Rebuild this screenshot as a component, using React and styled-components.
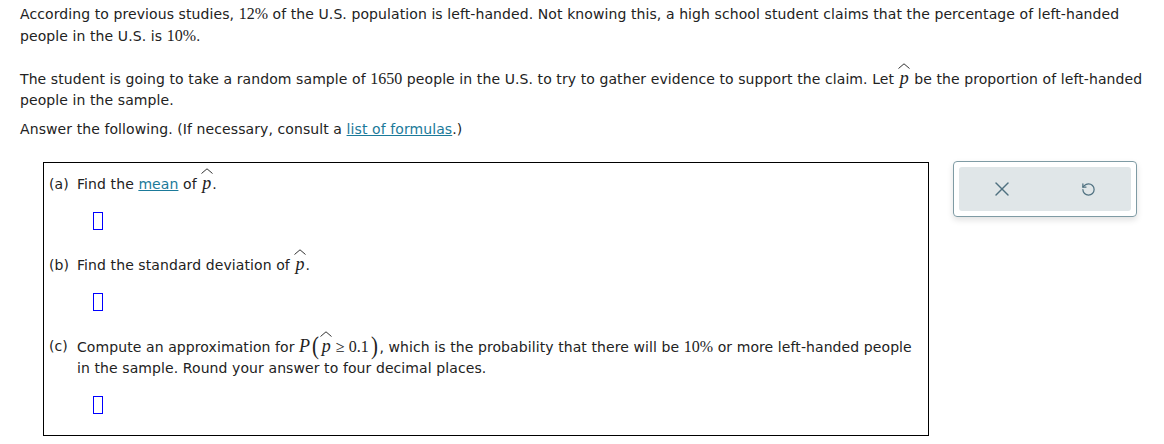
import React from "react"
import styled, { createGlobalStyle } from "styled-components"
import { X, RotateCcw } from "lucide-react"

const GlobalStyle = createGlobalStyle`
  body {
    margin: 0;
    background: #fff;
    font-family: "DejaVu Sans", Verdana, sans-serif;
    font-size: 14px;
    letter-spacing: 0.09px;
    color: #222;
  }
`

const Page = styled.div`
  padding: 3px 16px 0 20px;
`

const Para = styled.p`
  margin: 0 0 ${(p) => p.gap || 0}px 0;
  line-height: 21px;
`

const MathNum = styled.span`
  font-family: "Liberation Serif", "Times New Roman", serif;
  font-size: 16px;
  letter-spacing: 0;
`

const Link = styled.a`
  color: #1b7a9a;
  text-decoration: underline;
`

const Row = styled.div`
  display: flex;
  align-items: flex-start;
  margin-top: 22px;
`

const QuestionBox = styled.div`
  margin-left: 23px;
  width: 874px;
  border: 1px solid #000;
  padding: 11px 5px 21px 5px;
`

const Part = styled.div`
  display: flex;
  line-height: 21px;
  margin-bottom: 17px;
`

const Label = styled.span`
  width: 28px;
  flex: none;
`

const AnswerRow = styled.div`
  padding-left: 44px;
  height: 18px;
  margin-bottom: ${(p) => p.gap || 0}px;
`

const AnswerInput = styled.span`
  display: block;
  width: 8px;
  height: 16px;
  border: 1px solid #0000ff;
`

const HatWrap = styled.span`
  position: relative;
  display: inline-block;
  line-height: 1;
  font-family: "Liberation Serif", "Times New Roman", serif;
  font-style: italic;
  font-size: 18px;
  letter-spacing: 0;
  padding: 0 1px;
`

const HatMark = styled.svg`
  position: absolute;
  left: 50%;
  top: -6px;
  transform: translateX(-50%);
`

const Paren = styled.span`
  display: inline-block;
  font-family: "Liberation Serif", "Times New Roman", serif;
  font-size: 26px;
  line-height: 0;
  vertical-align: -2px;
  transform: scaleX(0.8);
  padding: 0 1px;
`

const SerifMath = styled.span`
  font-family: "Liberation Serif", "Times New Roman", serif;
  font-size: 16px;
  letter-spacing: 0;
`

const SerifItalic = styled(SerifMath)`
  font-style: italic;
  font-size: 18px;
`

const Panel = styled.div`
  margin-left: 24px;
  width: 184px;
  height: 56px;
  border: 1px solid #7f9ba4;
  border-radius: 4px;
  box-shadow: 0 3px 6px rgba(0, 0, 0, 0.12);
  padding: 5px;
  box-sizing: border-box;
  margin-top: -1px;
`

const PanelInner = styled.div`
  display: flex;
  height: 100%;
  background: #e0e6e8;
  border-radius: 3px;
`

const PanelButton = styled.button`
  flex: 1;
  border: none;
  background: transparent;
  display: flex;
  align-items: center;
  justify-content: center;
  padding: 0;
  color: #4f7180;
  cursor: pointer;
`

function Hat({ children }) {
  return (
    <HatWrap>
      <HatMark width="12" height="6" viewBox="0 0 12 6">
        <polyline points="0.5,5.5 6,0.8 11.5,5.5" fill="none" stroke="#333" strokeWidth="1" />
      </HatMark>
      {children}
    </HatWrap>
  )
}

export default function App() {
  return (
    <>
      <GlobalStyle />
      <Page>
        <Para gap={21}>
          According to previous studies, <MathNum>12%</MathNum> of the U.S. population is left-handed. Not knowing this, a high school student claims that the percentage of left-handed people in the U.S. is <MathNum>10%</MathNum>.
        </Para>
        <Para gap={8}>
          The student is going to take a random sample of <MathNum>1650</MathNum> people in the U.S. to try to gather evidence to support the claim. Let <Hat>p</Hat> be the proportion of left-handed people in the sample.
        </Para>
        <Para>
          Answer the following. (If necessary, consult a <Link href="#">list of formulas</Link>.)
        </Para>
        <Row>
          <QuestionBox>
            <Part>
              <Label>(a)</Label>
              <span>
                Find the <Link href="#">mean</Link> of <Hat>p</Hat>.
              </span>
            </Part>
            <AnswerRow gap={25}>
              <AnswerInput />
            </AnswerRow>
            <Part>
              <Label>(b)</Label>
              <span>
                Find the standard deviation of <Hat>p</Hat>.
              </span>
            </Part>
            <AnswerRow gap={25}>
              <AnswerInput />
            </AnswerRow>
            <Part>
              <Label>(c)</Label>
              <span>
                Compute an approximation for <SerifItalic>P</SerifItalic>
                <Paren>(</Paren>
                <Hat>p</Hat>
                <SerifMath> ≥ 0.1</SerifMath>
                <Paren>)</Paren>, which is the probability that there will be <MathNum>10%</MathNum> or more left-handed people in the sample. Round your answer to four decimal places.
              </span>
            </Part>
            <AnswerRow>
              <AnswerInput />
            </AnswerRow>
          </QuestionBox>
          <Panel>
            <PanelInner>
              <PanelButton aria-label="clear">
                <X size={24} strokeWidth={1.4} />
              </PanelButton>
              <PanelButton aria-label="undo">
                <RotateCcw size={15} strokeWidth={2} />
              </PanelButton>
            </PanelInner>
          </Panel>
        </Row>
      </Page>
    </>
  )
}
